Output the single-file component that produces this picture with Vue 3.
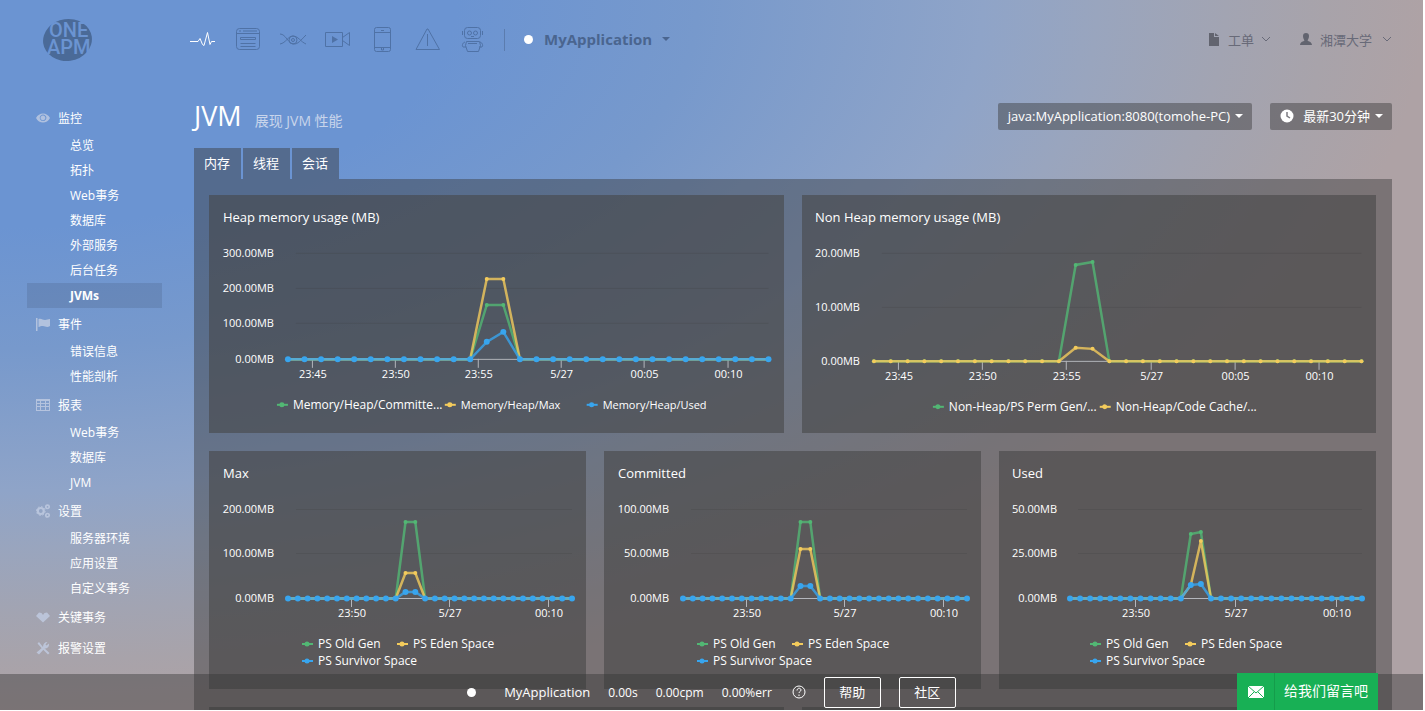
<script setup>
const menu = [
  { name: '监控', icon: 'eye', items: ['总览', '拓扑', 'Web事务', '数据库', '外部服务', '后台任务', 'JVMs'] },
  { name: '事件', icon: 'flag', items: ['错误信息', '性能剖析'] },
  { name: '报表', icon: 'table', items: ['Web事务', '数据库', 'JVM'] },
  { name: '设置', icon: 'gears', items: ['服务器环境', '应用设置', '自定义事务'] },
  { name: '关键事务', icon: 'gem', items: [] },
  { name: '报警设置', icon: 'tools', items: [] }
]

const tabs = ['内存', '线程', '会话']

const GREEN = '#52b774'
const YELLOW = '#f3cb5c'
const BLUE = '#38a5ee'

const spaces = [
  { label: 'PS Old Gen', x: 93, y: 193, size: 12, color: GREEN },
  { label: 'PS Eden Space', x: 188, y: 193, size: 12, color: YELLOW },
  { label: 'PS Survivor Space', x: 93, y: 210, size: 12, color: BLUE }
]

const shiftLegend = (dx) => spaces.map((s) => ({ ...s, x: s.x + dx }))

// Plot geometry is in the card's own coordinate space; peaks holds the y of points 12 and 13.
const wide = [
  {
    title: 'Heap memory usage (MB)', titleX: 14, width: 575, x0: 79, x1: 560, base: 164, labelX: 65,
    yAxis: [['300.00MB', 58], ['200.00MB', 93], ['100.00MB', 128], ['0.00MB', 164]],
    xAxis: [['23:45', 104], ['23:50', 187], ['23:55', 270], ['5/27', 353], ['00:05', 436], ['00:10', 520]],
    series: [
      { color: GREEN, peaks: [110, 110], r: 2 },
      { color: YELLOW, peaks: [84, 84], r: 2 },
      { color: BLUE, peaks: [147, 137], r: 3 }
    ],
    legend: [
      { label: 'Memory/Heap/Committe...', x: 68, y: 210, size: 12, color: GREEN },
      { label: 'Memory/Heap/Max', x: 236, y: 210, size: 11, color: YELLOW },
      { label: 'Memory/Heap/Used', x: 378, y: 210, size: 11, color: BLUE }
    ]
  },
  {
    title: 'Non Heap memory usage (MB)', titleX: 13, width: 575, x0: 72, x1: 560, base: 166, labelX: 58,
    yAxis: [['20.00MB', 58], ['10.00MB', 112], ['0.00MB', 166]],
    xAxis: [['23:45', 97], ['23:50', 181], ['23:55', 265], ['5/27', 350], ['00:05', 434], ['00:10', 518]],
    series: [
      { color: GREEN, peaks: [70, 67], r: 2 },
      { color: YELLOW, peaks: [153, 154], r: 2 }
    ],
    legend: [
      { label: 'Non-Heap/PS Perm Gen/...', x: 131, y: 212, size: 12, color: GREEN },
      { label: 'Non-Heap/Code Cache/...', x: 298, y: 212, size: 12, color: YELLOW }
    ]
  }
]

const narrow = [
  {
    title: 'Max', titleX: 14, width: 377, x0: 79, x1: 363, base: 147, labelX: 65,
    yAxis: [['200.00MB', 58], ['100.00MB', 102], ['0.00MB', 147]],
    xAxis: [['23:50', 143], ['5/27', 241], ['00:10', 340]],
    series: [
      { color: GREEN, peaks: [71, 71], r: 2 },
      { color: YELLOW, peaks: [122, 122], r: 2 },
      { color: BLUE, peaks: [141, 141], r: 3 }
    ],
    legend: shiftLegend(0)
  },
  {
    title: 'Committed', titleX: 14, width: 377, x0: 79, x1: 363, base: 147, labelX: 65,
    yAxis: [['100.00MB', 58], ['50.00MB', 102], ['0.00MB', 147]],
    xAxis: [['23:50', 143], ['5/27', 241], ['00:10', 340]],
    series: [
      { color: GREEN, peaks: [71, 71], r: 2 },
      { color: YELLOW, peaks: [98, 98], r: 2 },
      { color: BLUE, peaks: [135, 135], r: 3 }
    ],
    legend: shiftLegend(0)
  },
  {
    title: 'Used', titleX: 13, width: 377, x0: 71, x1: 363, base: 147, labelX: 58,
    yAxis: [['50.00MB', 58], ['25.00MB', 102], ['0.00MB', 147]],
    xAxis: [['23:50', 137], ['5/27', 237], ['00:10', 338]],
    series: [
      { color: GREEN, peaks: [83, 81], r: 2 },
      { color: YELLOW, peaks: [134, 90], r: 2 },
      { color: BLUE, peaks: [134, 133], r: 3 }
    ],
    legend: shiftLegend(-2)
  }
]

const rows = [
  { kind: 'two', charts: wide },
  { kind: 'three', charts: narrow }
]

const COUNT = 30

function points(chart, serie) {
  const step = (chart.x1 - chart.x0) / (COUNT - 1)
  return Array.from({ length: COUNT }, (_, i) => ({
    x: Math.round((chart.x0 + i * step) * 10) / 10,
    y: i === 12 ? serie.peaks[0] : i === 13 ? serie.peaks[1] : chart.base + 0.5
  }))
}

function line(chart, serie) {
  return points(chart, serie).map((p) => p.x + ',' + p.y).join(' ')
}
</script>

<template>
  <div class="shell">
    <header class="top">
      <a href="#" class="logo" aria-label="OneAPM">
        <svg width="50" height="44" viewBox="0 0 50 44">
          <ellipse cx="24.500" cy="22" rx="24.500" ry="21" transform="rotate(-8 24.500 22)" class="logo-disc" />
          <text class="logo-text"><tspan x="6" y="19">ONE</tspan><tspan x="4" y="36">APM</tspan></text>
        </svg>
      </a>
      <nav class="products" aria-label="产品">
        <a href="#" class="product active" aria-label="应用">
          <svg width="26" height="28" viewBox="0 0 26 28"><path d="M0 15.500h8l2-3 2.500 6 1.500 1 3.500-13 2.500 12 1.500-3H25" /></svg>
        </a>
        <a href="#" class="product" aria-label="浏览器">
          <svg width="26" height="28" viewBox="0 0 26 28"><rect x="1.500" y="2.500" width="23" height="21" rx="3" /><path d="M1.500 7.500h23M4 5h2M8 5h14M5.500 11.500h15v2h-15zM5.500 17.500h15M5.500 20.500h15" /></svg>
        </a>
        <a href="#" class="product" aria-label="透视">
          <svg width="26" height="28" viewBox="0 0 26 28"><path d="M0 8c6 0 8 10 14 10 4 0 6-3 12-9M0 18c6-1 8-8 13-8 5 0 8 6 13 8" /><ellipse cx="13" cy="14" rx="4" ry="4" /><circle cx="13" cy="14" r="1.500" /></svg>
        </a>
        <a href="#" class="product" aria-label="视频">
          <svg width="26" height="28" viewBox="0 0 26 28"><path d="M.5 6.500h17v14H.5zM17.500 11.500l7-5v13l-7-5z" /><path class="solid" d="M7 10l6 3.500L7 17z" /></svg>
        </a>
        <a href="#" class="product" aria-label="移动">
          <svg width="26" height="28" viewBox="0 0 26 28"><rect x="4.500" y="1.500" width="16" height="24" rx="2" /><path d="M4.500 6.500h16M4.500 21.500h16M11 4.500h3M11.500 22v2h2v-2" /></svg>
        </a>
        <a href="#" class="product" aria-label="告警">
          <svg width="26" height="28" viewBox="0 0 26 28"><path d="M12 3L1 23.500h23.500L13 3zM12.500 8v12" /></svg>
        </a>
        <a href="#" class="product" aria-label="机器人">
          <svg width="26" height="28" viewBox="0 0 26 28"><rect x="4.500" y="1.500" width="16" height="11" rx="3" /><circle cx="9.500" cy="7" r="2" /><circle cx="15.500" cy="7" r="2" /><path d="M2.500 5v4M22.500 5v4M11 10.500h3M6.500 15.500h13l1 4-2 6h-11l-2-6zM5 16c-3 1-3 4-2 5h3M20 16c3 1 3 4 2 5h-3M8 17.500h9" /></svg>
        </a>
      </nav>
      <span class="rule"></span>
      <button class="app-pick" type="button">
        <span class="dot"></span>MyApplication<span class="caret"></span>
      </button>
      <div class="account">
        <button type="button" class="plain">
          <svg width="14" height="14" viewBox="0 0 14 14" class="glyph"><path d="M2 1h5v4h5v9H2zM8 1l4 3H8z" /></svg>
          工单
          <svg width="10" height="6" viewBox="0 0 10 6" class="chevron"><path d="M1 1l4 4 4-4" /></svg>
        </button>
        <button type="button" class="plain">
          <svg width="14" height="14" viewBox="0 0 14 14" class="glyph"><path d="M7 1c2 0 3 1 3 3S9 8 8.500 8.500c1 1 4 1 4.500 4.500H1c.5-3.500 3.500-3.500 4.500-4.500C5 8 4 6 4 4s1-3 3-3z" /></svg>
          湘潭大学
          <svg width="10" height="6" viewBox="0 0 10 6" class="chevron last"><path d="M1 1l4 4 4-4" /></svg>
        </button>
      </div>
    </header>

    <div class="body">
      <nav class="side" aria-label="菜单">
        <section v-for="group in menu" :key="group.name" class="group">
          <a href="#" class="head">
            <svg width="14" height="14" viewBox="0 0 14 14" class="side-icon">
              <path v-if="group.icon === 'eye'" fill-rule="evenodd" d="M0 7c3-6 11-6 14 0-3 6-11 6-14 0zM7 3.500a3.300 3.300 0 1 0 .1 0zM7 4.500a2.400 2.400 0 1 1-.1 0z" />
              <path v-else-if="group.icon === 'flag'" d="M0 1h1.500v13H0zM2.500 2c3-1 4 1 6.500 1 2 0 3-1 5-1v7c-3 2-5 0-7 0s-3 .5-4.500 1z" />
              <path v-else-if="group.icon === 'table'" fill-rule="evenodd" d="M0 1h14v12H0zM1 3v2h3V3zM5 3v2h4V3zM10 3v2h3V3zM1 6v2h3V6zM5 6v2h4V6zM10 6v2h3V6zM1 9v3h3V9zM5 9v3h4V9zM10 9v3h3V9z" />
              <g v-else-if="group.icon === 'gears'" class="rings">
                <circle cx="4.800" cy="7" r="3" stroke-width="2.200" /><circle cx="4.800" cy="7" r="4.400" stroke-dasharray="1.700 1.700" />
                <circle cx="11.500" cy="2.800" r="1.700" stroke-width="1.700" /><circle cx="11.500" cy="11.200" r="1.700" stroke-width="1.700" />
              </g>
              <path v-else-if="group.icon === 'gem'" d="M3 2.500L5.500 3 7 5l1.500-2 2.500-.5L14 6l-7 6.500L0 6z" />
              <g v-else>
                <path d="M1.500 2.500L3 1l3.500 4.500L13.500 12 12 13.500 5.500 7z" />
                <path d="M.5 11.500L7 6c0-3 1.500-5 4.500-5L9.500 3.500l1 1L13 2.500c.5 3-1.500 5-4.500 5L3 13.500z" />
              </g>
            </svg>
            {{ group.name }}
          </a>
          <a
            v-for="item in group.items"
            :key="item"
            href="#"
            class="item"
            :class="{ current: item === 'JVMs' }"
          >{{ item }}</a>
        </section>
      </nav>

      <main class="main">
        <div class="title-row">
          <h1>JVM</h1>
          <p class="sub">展现 JVM 性能</p>
          <button type="button" class="drop host">java:MyApplication:8080(tomohe-PC)<span class="caret"></span></button>
          <button type="button" class="drop">
            <svg width="14" height="14" viewBox="0 0 14 14" class="clock"><circle cx="7" cy="7" r="6.500" /><path d="M7 3v4l3 2" /></svg>
            最新30分钟<span class="caret"></span>
          </button>
        </div>

        <div class="tabs" role="tablist">
          <button v-for="(tab, i) in tabs" :key="tab" type="button" role="tab" class="tab" :aria-selected="i === 0">{{ tab }}</button>
        </div>

        <div class="panel">
          <div v-for="row in rows" :key="row.kind" class="row" :class="row.kind">
            <article v-for="chart in row.charts" :key="chart.title" class="card">
              <svg class="plot" :viewBox="'0 0 ' + chart.width + ' 238'" role="img" :aria-label="chart.title">
                <text :x="chart.titleX" y="27" class="name">{{ chart.title }}</text>
                <g v-for="tick in chart.yAxis" :key="tick[0]">
                  <line :x1="chart.x0 + 8" :x2="chart.x1" :y1="tick[1] + 0.5" :y2="tick[1] + 0.5" class="grid" />
                  <text :x="chart.labelX" :y="tick[1] + 4" class="tick end">{{ tick[0] }}</text>
                </g>
                <line :x1="chart.x0" :x2="chart.x1" :y1="chart.base + 0.5" :y2="chart.base + 0.5" class="axis" />
                <g v-for="tick in chart.xAxis" :key="tick[0]">
                  <line :x1="tick[1] - 0.5" :x2="tick[1] - 0.5" :y1="chart.base" :y2="chart.base + 9" class="axis" />
                  <text :x="tick[1]" :y="chart.base + 19" class="tick mid">{{ tick[0] }}</text>
                </g>
                <g v-for="serie in chart.series" :key="serie.color">
                  <polyline :points="line(chart, serie)" :stroke="serie.color" class="curve" />
                  <circle v-for="(p, i) in points(chart, serie)" :key="i" :cx="p.x" :cy="p.y" :r="serie.r" :fill="serie.color" />
                </g>
                <g v-for="entry in chart.legend" :key="entry.label">
                  <line :x1="entry.x" :x2="entry.x + 11" :y1="entry.y" :y2="entry.y" :stroke="entry.color" stroke-width="2" />
                  <circle :cx="entry.x + 5" :cy="entry.y" r="2.500" :fill="entry.color" />
                  <text :x="entry.x + 16" :y="entry.y + 4" :font-size="entry.size" class="key">{{ entry.label }}</text>
                </g>
              </svg>
            </article>
          </div>
          <div class="row two">
            <article class="card next"></article>
            <article class="card next"></article>
          </div>
        </div>
      </main>
    </div>

    <footer class="status">
      <span class="dot"></span>
      <span class="status-app">MyApplication</span>
      <span class="metric">0.00s</span>
      <span class="metric">0.00cpm</span>
      <span class="metric">0.00%err</span>
      <svg width="14" height="14" viewBox="0 0 14 14" class="help"><circle cx="7" cy="7" r="6" /><path d="M5 5.500c0-3 4-3 4-.5 0 1.500-2 1.500-2 3M7 9.500v1.500" /></svg>
      <button type="button" class="outline">帮助</button>
      <button type="button" class="outline">社区</button>
    </footer>

    <button type="button" class="chat">
      <span class="chat-icon">
        <svg width="16" height="12" viewBox="0 0 16 12"><rect width="16" height="12" fill="#fff" /><path d="M0 0l8 7 8-7M0 12l6-6M16 12l-6-6" /></svg>
      </span>
      <span class="chat-text">给我们留言吧</span>
    </button>
  </div>
</template>

<style>
body {
  background: #fff;
}
</style>

<style scoped>
.shell {
  position: relative;
  height: calc(100vh - 1px);
  margin-right: 2px;
  overflow: hidden;
  color: #fff;
  font-family: "Open Sans", "Noto Sans CJK SC", sans-serif;
  font-size: 12px;
  background: radial-gradient(ellipse 100vw 100vh at 0 0, #6b94d2 0%, #6b94d2 32%, #7799cc 49%, #8fa4c8 69%, #99a5be 77%, #a2a4b2 86%, #a8a3aa 93%, #aea2a5 100%);
}
button {
  border: 0;
  padding: 0;
  background: none;
  color: inherit;
  font: inherit;
  cursor: pointer;
}
a {
  color: inherit;
  text-decoration: none;
}
.top {
  display: flex;
  align-items: center;
  height: 80px;
  padding: 0 31px 0 43px;
}
.logo {
  width: 147px;
  height: 44px;
}
.logo-disc {
  fill: #4a6a98;
}
.logo-text {
  fill: #6b94d2;
  font-family: Roboto, sans-serif;
  font-size: 20px;
  font-weight: 500;
}
.products {
  display: flex;
  gap: 19px;
}
.product {
  height: 28px;
}
.product svg {
  display: block;
  fill: none;
  stroke: #4f72a6;
}
.product.active svg {
  stroke: #fff;
}
.product .solid {
  fill: #4f72a6;
  stroke: none;
}
.rule {
  width: 1px;
  height: 22px;
  margin: 0 19px 0 18px;
  background: #5b7cae;
}
.app-pick {
  display: flex;
  align-items: center;
  color: #4a658f;
  font-size: 15px;
  font-weight: 700;
  line-height: 20px;
  padding-bottom: 2px;
}
.dot {
  width: 9px;
  height: 9px;
  border-radius: 50%;
  background: #fff;
}
.app-pick .dot {
  margin-right: 11px;
}
.caret {
  display: inline-block;
  margin-left: 5px;
  border: 4px solid transparent;
  border-top-color: currentColor;
  border-bottom: 0;
  vertical-align: middle;
}
.app-pick .caret {
  margin-left: 10px;
}
.account {
  display: flex;
  gap: 28px;
  margin-left: auto;
  padding-bottom: 2px;
  color: #686a78;
  font-size: 13px;
}
.plain {
  display: flex;
  align-items: center;
  gap: 7px;
}
.glyph {
  fill: #62646f;
}
.chevron {
  fill: none;
  stroke: #686a78;
}
.chevron.last {
  margin-left: 3px;
}
.body {
  display: flex;
}
.side {
  flex: none;
  width: 135px;
  padding: 23px 32px 0 27px;
}
.group {
  padding-bottom: 1px;
}
.head {
  display: flex;
  align-items: center;
  gap: 8px;
  height: 30px;
  padding-left: 9px;
}
.side-icon {
  fill: #c2cde3;
  opacity: 0.8;
}
.rings {
  fill: none;
  stroke: #c2cde3;
}
.item {
  display: block;
  height: 25px;
  padding-left: 43px;
  line-height: 25px;
}
.item.current {
  background: rgba(84, 108, 150, 0.35);
  font-weight: 700;
}
.main {
  flex: 1;
  min-width: 0;
  padding-right: 31px;
}
.title-row {
  display: flex;
  align-items: center;
  height: 68px;
}
h1 {
  margin: 4px 13px 0 0;
  font-size: 27px;
  font-weight: 400;
  line-height: 36px;
}
.sub {
  margin: 14px auto 0 0;
  color: #c8d5eb;
  font-size: 14px;
  line-height: 20px;
}
.drop {
  display: flex;
  align-items: center;
  height: 27px;
  margin-top: 5px;
  padding: 0 9px 2px 10px;
  border-radius: 2px;
  background: rgba(54, 54, 54, 0.43);
  font-size: 13px;
}
.host {
  margin-right: 18px;
}
.clock {
  margin-right: 9px;
  fill: #fff;
}
.clock path {
  fill: none;
  stroke: #7d7c82;
  stroke-width: 1.5;
}
.tabs {
  display: flex;
  gap: 2px;
}
.tab {
  height: 31px;
  padding: 0 11px 2px 10px;
  background: rgba(54, 54, 54, 0.43);
  font-size: 13px;
}
.panel {
  display: grid;
  gap: 18px;
  padding: 16px 16px 16px 15px;
  background: rgba(54, 54, 54, 0.43);
}
.row {
  display: grid;
  gap: 18px;
}
.two {
  grid-template-columns: repeat(2, 1fr);
}
.three {
  grid-template-columns: repeat(3, 1fr);
}
.card {
  background: rgba(68, 68, 68, 0.57);
}
.next {
  height: 238px;
}
.plot {
  display: block;
  width: 100%;
}
.name {
  fill: #fff;
  font-size: 13px;
}
.tick {
  fill: #fff;
  font-size: 11px;
}
.end {
  text-anchor: end;
}
.mid {
  text-anchor: middle;
}
.key {
  fill: #fff;
}
.grid {
  stroke: rgba(60, 60, 60, 0.2);
}
.axis {
  stroke: #b4b6bc;
}
.curve {
  fill: none;
  stroke-width: 2.5;
  opacity: 0.8;
}
.status {
  position: absolute;
  right: 0;
  bottom: 0;
  left: 0;
  display: flex;
  align-items: center;
  justify-content: center;
  height: 36px;
  background: rgba(54, 54, 54, 0.43);
}
.status-app {
  margin: 0 18px 0 28px;
  font-size: 13px;
}
.metric {
  margin-right: 18px;
}
.help {
  margin-left: 2px;
  fill: none;
  stroke: #fff;
}
.outline {
  width: 57px;
  height: 31px;
  padding-bottom: 2px;
  margin-left: 18px;
  border: 1px solid #fff;
  border-radius: 2px;
  font-size: 13px;
}
.chat {
  position: absolute;
  right: 45px;
  bottom: 0;
  display: flex;
  align-items: stretch;
  height: 37px;
  background: #18b055;
  font-size: 14px;
}
.chat-icon {
  display: flex;
  align-items: center;
  justify-content: center;
  width: 37px;
  border-right: 1px solid #159c4b;
}
.chat-icon path {
  fill: none;
  stroke: #18b055;
}
.chat-text {
  padding: 0 10px 0 9px;
  line-height: 36px;
}
</style>
